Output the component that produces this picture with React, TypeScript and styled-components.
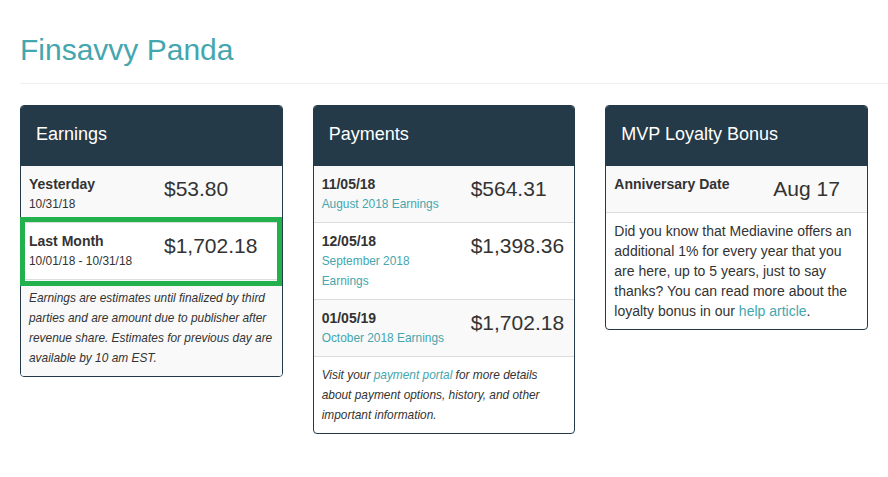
import React from "react";
import styled, { createGlobalStyle, css } from "styled-components";

const GlobalStyle = createGlobalStyle`
  body {
    margin: 0;
    background: #fff;
    font-family: "Liberation Sans", Arial, sans-serif;
    color: #333;
  }
`;

const Page = styled.div`
  padding-left: 20px;
`;

const Title = styled.h1`
  margin: 33px 0 0;
  font-size: 30px;
  line-height: 33px;
  font-weight: normal;
  color: #44a6ae;
`;

const Rule = styled.hr`
  margin: 17px 0 21px;
  border: 0;
  border-top: 1px solid #eee;
`;

const Cards = styled.div`
  width: 848px;
  display: grid;
  grid-template-columns: repeat(3, 1fr);
  column-gap: 30px;
  align-items: start;
`;

const Card = styled.div`
  border: 1px solid #243a48;
  border-radius: 4px;
  overflow: visible;
  background: #fff;
`;

const CardHeader = styled.div`
  background: #243a48;
  color: #fff;
  font-size: 18px;
  line-height: 20px;
  padding: 18px 15px 22px;
  border-radius: 3px 3px 0 0;
`;

const CardBody = styled.div`
  & > *:nth-child(odd) {
    background: #f9f9f9;
  }
  & > *:last-child {
    border-radius: 0 0 3px 3px;
  }
`;

const Row = styled.div<{ $left: number; $marked?: boolean }>`
  position: relative;
  display: grid;
  grid-template-columns: ${p => p.$left}px 1fr;
  padding: 8px;
  border-bottom: 1px solid #ddd;

  ${p =>
    p.$marked &&
    css`
      &::after {
        content: "";
        position: absolute;
        left: -1px;
        right: 0;
        top: -6px;
        bottom: -7px;
        border: 5px solid #22b14c;
        pointer-events: none;
      }
    `}
`;

const Info = styled.div`
  padding-right: 16px;
`;

const Label = styled.div`
  font-size: 14px;
  line-height: 20px;
  font-weight: bold;
`;

const Sub = styled.div<{ $link?: boolean }>`
  font-size: 11.9px;
  line-height: 20px;
  color: ${p => (p.$link ? "#44a6ae" : "#333")};
`;

const Amount = styled.div`
  font-size: 21px;
  line-height: 30px;
`;

const Note = styled.div`
  padding: 8px;
  font-size: 11.9px;
  line-height: 20px;
  font-style: italic;
`;

const Text = styled.div`
  padding: 8px;
  font-size: 14px;
  line-height: 20px;
`;

const Link = styled.a`
  color: #44a6ae;
  text-decoration: none;
`;

export default function App() {
  return (
    <>
      <GlobalStyle />
      <Page>
        <Title>Finsavvy Panda</Title>
        <Rule />
        <Cards>
          <Card>
            <CardHeader>Earnings</CardHeader>
            <CardBody>
              <Row $left={135}>
                <Info>
                  <Label>Yesterday</Label>
                  <Sub>10/31/18</Sub>
                </Info>
                <Amount>$53.80</Amount>
              </Row>
              <Row $left={135} $marked>
                <Info>
                  <Label>Last Month</Label>
                  <Sub>10/01/18 - 10/31/18</Sub>
                </Info>
                <Amount>$1,702.18</Amount>
              </Row>
              <Note>
                Earnings are estimates until finalized by third parties and are
                amount due to publisher after revenue share. Estimates for
                previous day are available by 10 am EST.
              </Note>
            </CardBody>
          </Card>

          <Card>
            <CardHeader>Payments</CardHeader>
            <CardBody>
              <Row $left={149}>
                <Info>
                  <Label>11/05/18</Label>
                  <Sub $link>August 2018 Earnings</Sub>
                </Info>
                <Amount>$564.31</Amount>
              </Row>
              <Row $left={149}>
                <Info>
                  <Label>12/05/18</Label>
                  <Sub $link>September 2018 Earnings</Sub>
                </Info>
                <Amount>$1,398.36</Amount>
              </Row>
              <Row $left={149}>
                <Info>
                  <Label>01/05/19</Label>
                  <Sub $link>October 2018 Earnings</Sub>
                </Info>
                <Amount>$1,702.18</Amount>
              </Row>
              <Note>
                Visit your <Link href="#">payment portal</Link> for more details
                about payment options, history, and other important information.
              </Note>
            </CardBody>
          </Card>

          <Card>
            <CardHeader>MVP Loyalty Bonus</CardHeader>
            <CardBody>
              <Row $left={159}>
                <Info>
                  <Label>Anniversary Date</Label>
                </Info>
                <Amount>Aug 17</Amount>
              </Row>
              <Text>
                Did you know that Mediavine offers an additional 1% for every
                year that you are here, up to 5 years, just to say thanks? You
                can read more about the loyalty bonus in our{" "}
                <Link href="#">help article</Link>.
              </Text>
            </CardBody>
          </Card>
        </Cards>
      </Page>
    </>
  );
}
